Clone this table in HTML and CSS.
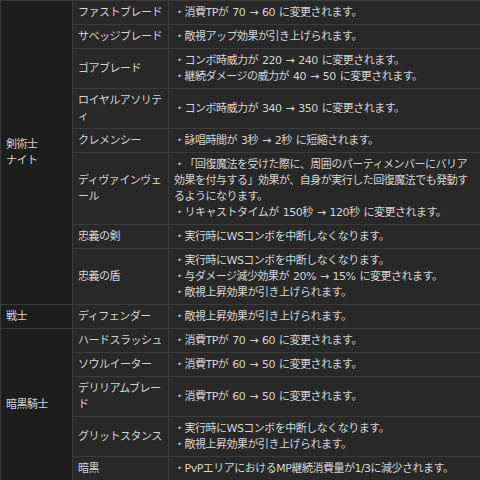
FILE: index.html
```html
<!DOCTYPE html>
<html lang="ja">
<head>
<meta charset="utf-8">
<link rel="stylesheet" href="styles.css">
</head>
<body>
<table class="changes">
<colgroup><col class="c-job"><col class="c-skill"><col class="c-desc"></colgroup>
<tbody>
<tr><td class="job" rowspan="8">剣術士<br>ナイト</td><td class="skill">ファストブレード</td><td class="desc">・消費TPが 70 → 60 に変更されます。</td></tr>
<tr><td class="skill">サベッジブレード</td><td class="desc">・敵視アップ効果が引き上げられます。</td></tr>
<tr><td class="skill">ゴアブレード</td><td class="desc">・コンボ時威力が 220 → 240 に変更されます。<br>・継続ダメージの威力が 40 → 50 に変更されます。</td></tr>
<tr><td class="skill">ロイヤルアソリティ</td><td class="desc">・コンボ時威力が 340 → 350 に変更されます。</td></tr>
<tr><td class="skill">クレメンシー</td><td class="desc">・詠唱時間が 3秒 → 2秒 に短縮されます。</td></tr>
<tr><td class="skill">ディヴァインヴェール</td><td class="desc">・「回復魔法を受けた際に、周囲のパーティメンバーにバリア効果を付与する」効果が、自身が実行した回復魔法でも発動するようになります。<br>・リキャストタイムが 150秒 → 120秒 に変更されます。</td></tr>
<tr><td class="skill">忠義の剣</td><td class="desc">・実行時にWSコンボを中断しなくなります。</td></tr>
<tr><td class="skill">忠義の盾</td><td class="desc">・実行時にWSコンボを中断しなくなります。<br>・与ダメージ減少効果が 20% → 15% に変更されます。<br>・敵視上昇効果が引き上げられます。</td></tr>
<tr><td class="job">戦士</td><td class="skill">ディフェンダー</td><td class="desc">・敵視上昇効果が引き上げられます。</td></tr>
<tr><td class="job" rowspan="6">暗黒騎士</td><td class="skill">ハードスラッシュ</td><td class="desc">・消費TPが 70 → 60 に変更されます。</td></tr>
<tr><td class="skill">ソウルイーター</td><td class="desc">・消費TPが 60 → 50 に変更されます。</td></tr>
<tr><td class="skill">デリリアムブレード</td><td class="desc">・消費TPが 60 → 50 に変更されます。</td></tr>
<tr><td class="skill">グリットスタンス</td><td class="desc">・実行時にWSコンボを中断しなくなります。<br>・敵視上昇効果が引き上げられます。</td></tr>
<tr><td class="skill">暗黒</td><td class="desc">・PvPエリアにおけるMP継続消費量が1/3に減少されます。</td></tr>
</tbody>
</table>
</body>
</html>
```
FILE: styles.css
```css
html, body {
  margin: 0;
  padding: 0;
  background: #262626;
}
.changes {
  width: 480px;
  border-collapse: collapse;
  table-layout: fixed;
  font-family: "DejaVu Sans", "Noto Sans CJK JP", sans-serif;
  font-size: 11px;
  letter-spacing: -0.5px;
  word-spacing: 1px;
  line-height: 16px;
  color: #d4d4d4;
  text-spacing-trim: space-all;
}
.c-job { width: 72px; }
.c-skill { width: 96px; }
.c-desc { width: 312px; }
.changes td {
  border: 1px solid #3b3b3b;
  padding: 4px 4px 3px 5px;
  vertical-align: middle;
  background: #282828;
  word-break: break-all;
}
.changes td.job {
  background: #1d1d1d;
}
```
